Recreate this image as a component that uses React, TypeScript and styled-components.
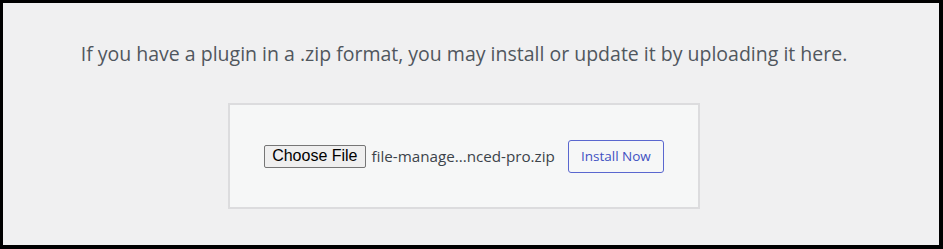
import styled, { createGlobalStyle } from "styled-components"

const GlobalStyle = createGlobalStyle`
    body {
        margin: 0;
        background-color: #ffffff;
    }
`

const Frame = styled.div`
    box-sizing: border-box;
    width: 943px;
    height: 249px;
    border: 3px solid #000000;
    border-right-width: 4px;
    border-bottom-width: 4px;
    background-color: #f0f0f1;
    display: flex;
    flex-direction: column;
    align-items: center;
    padding-top: 38px;
    padding-right: 14px;
`

const Description = styled.p`
    margin: 0;
    font-family: "Open Sans", "Noto Sans", sans-serif;
    font-size: 19.5px;
    line-height: 26px;
    color: #50575e;
    text-align: center;
    white-space: nowrap;
`

const UploadBox = styled.form`
    box-sizing: border-box;
    width: 472px;
    height: 106px;
    margin-top: 36px;
    border: 2px solid #dcdcde;
    background-color: #f6f7f7;
    display: flex;
    align-items: center;
    justify-content: center;
`

const ChooseButton = styled.button`
    box-sizing: border-box;
    height: 23px;
    padding: 0 7px;
    font-family: "Liberation Sans", Arial, sans-serif;
    font-size: 16px;
    color: #000000;
    background-color: #efefef;
    border: 1px solid #767676;
    border-radius: 2px;
`

const FileName = styled.span`
    margin-left: 6px;
    font-family: "Open Sans", "Noto Sans", sans-serif;
    font-size: 15.2px;
    color: #3c434a;
`

const InstallButton = styled.button`
    box-sizing: border-box;
    height: 33px;
    width: 96px;
    margin-left: 13px;
    font-family: "Open Sans", "Noto Sans", sans-serif;
    font-size: 13.5px;
    color: #3f51c2;
    background-color: #f6f7f7;
    border: 1px solid #5a67cf;
    border-radius: 3px;
`

export default function App() {
    return (
        <>
            <GlobalStyle />
            <Frame>
                <Description>
                    If you have a plugin in a .zip format, you may install or update it by uploading it here.
                </Description>
                <UploadBox onSubmit={(e) => e.preventDefault()}>
                    <ChooseButton type="button">Choose File</ChooseButton>
                    <FileName>file-manage...nced-pro.zip</FileName>
                    <InstallButton type="submit">Install Now</InstallButton>
                </UploadBox>
            </Frame>
        </>
    )
}
